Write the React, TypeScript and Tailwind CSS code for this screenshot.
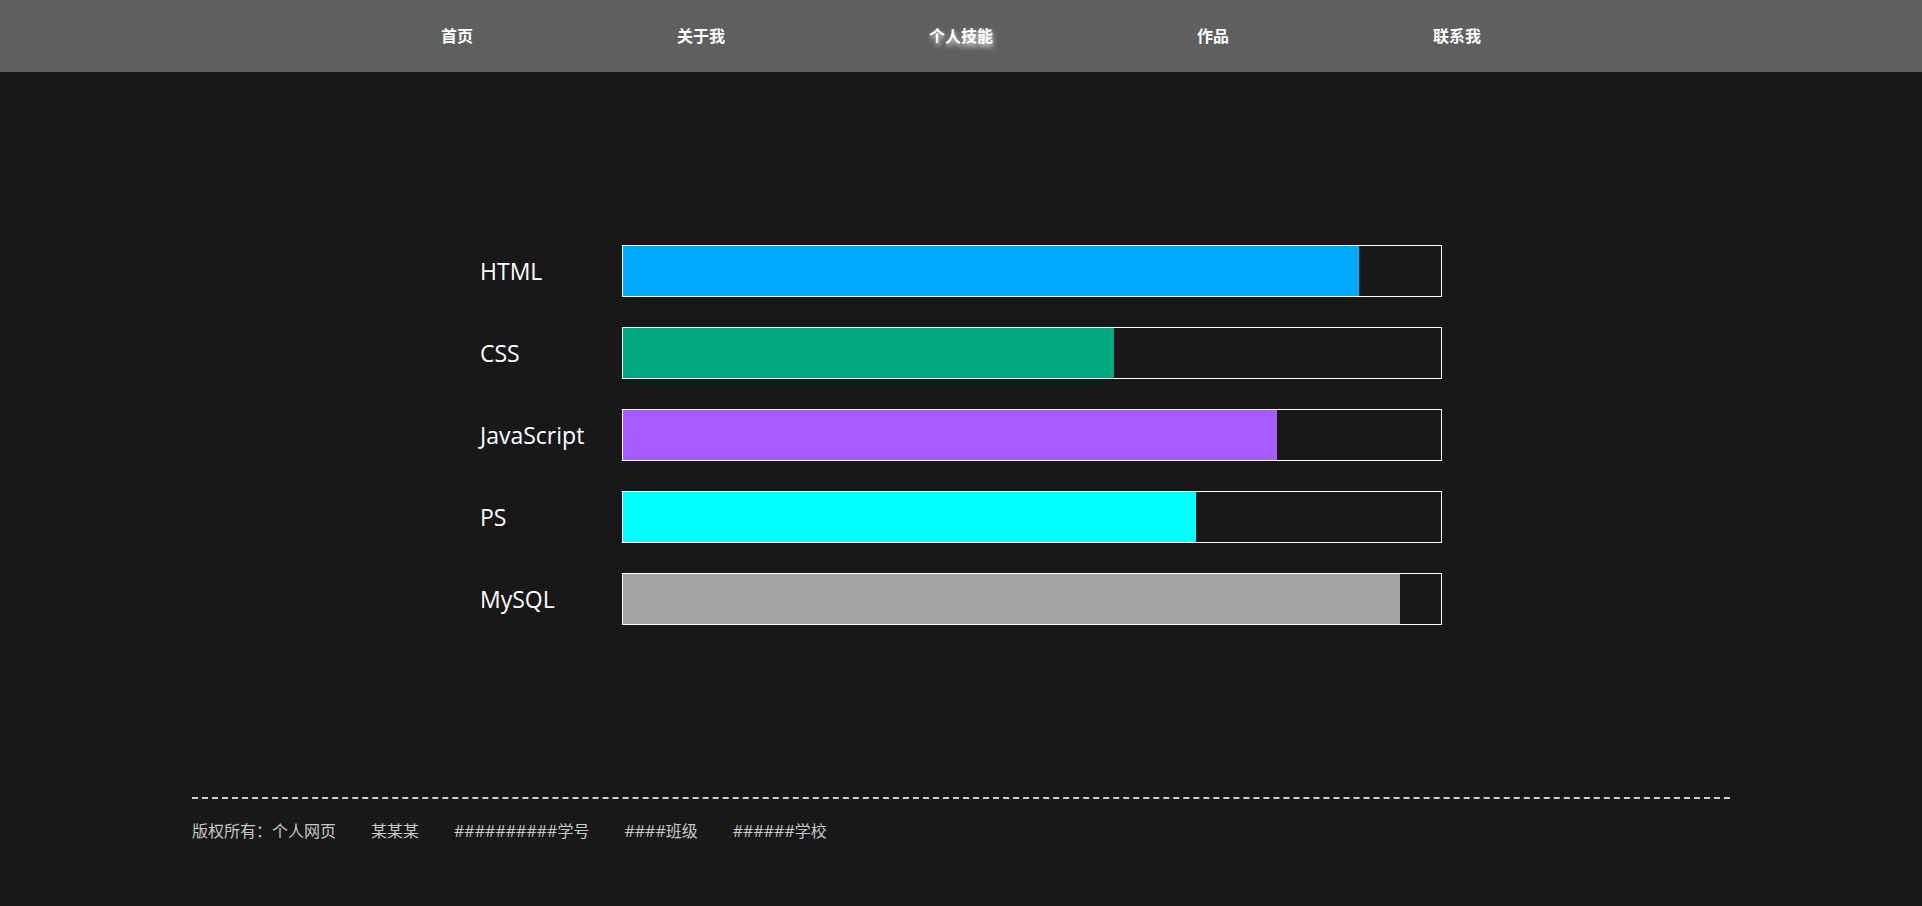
const navItems = ["首页", "关于我", "个人技能", "作品", "联系我"];

const skills = [
  { name: "HTML", value: 90, color: "bg-[#00aaff]" },
  { name: "CSS", value: 60, color: "bg-[#00a87d]" },
  { name: "JavaScript", value: 80, color: "bg-[#a65bff]" },
  { name: "PS", value: 70, color: "bg-[#00ffff]" },
  { name: "MySQL", value: 95, color: "bg-[#a4a4a4]" },
];

const footerItems = ["版权所有：个人网页", "某某某", "##########学号", "####班级", "######学校"];

export default function App() {
  return (
    <div
      className="min-h-[906px] bg-[#181818] text-white"
      style={{ fontFamily: '"Open Sans", "Noto Sans CJK SC", sans-serif' }}
    >
      {/* nav */}
      <header className="h-[72px] bg-[#5f5f5f]">
        <ul className="flex h-full items-center justify-center gap-[204px]">
          {navItems.map((item) => (
            <li
              key={item}
              className={
                "text-[16px] font-bold leading-none text-white" +
                (item === "个人技能"
                  ? " [text-shadow:1px_3px_5px_rgba(255,255,255,0.85)]"
                  : "")
              }
            >
              {item}
            </li>
          ))}
        </ul>
      </header>

      {/* skills */}
      <section className="mx-auto mt-[173px] flex w-[962px] flex-col gap-[30px]">
        {skills.map((s) => (
          <div key={s.name} className="flex items-center">
            <span className="w-[142px] text-[23px] leading-none">{s.name}</span>
            <div className="h-[52px] w-[820px] border border-white bg-[#181818]">
              <div className={"h-full " + s.color} style={{ width: `${s.value}%` }} />
            </div>
          </div>
        ))}
      </section>

      {/* footer */}
      <footer className="mx-auto mt-[172px] w-[1538px] border-t-2 border-dashed border-[#cfcfcf] pt-[20px]">
        <p className="flex gap-[35px] text-[16px] leading-6 text-[#c8c8c8]">
          {footerItems.map((f) => (
            <span key={f}>{f}</span>
          ))}
        </p>
      </footer>
    </div>
  );
}
